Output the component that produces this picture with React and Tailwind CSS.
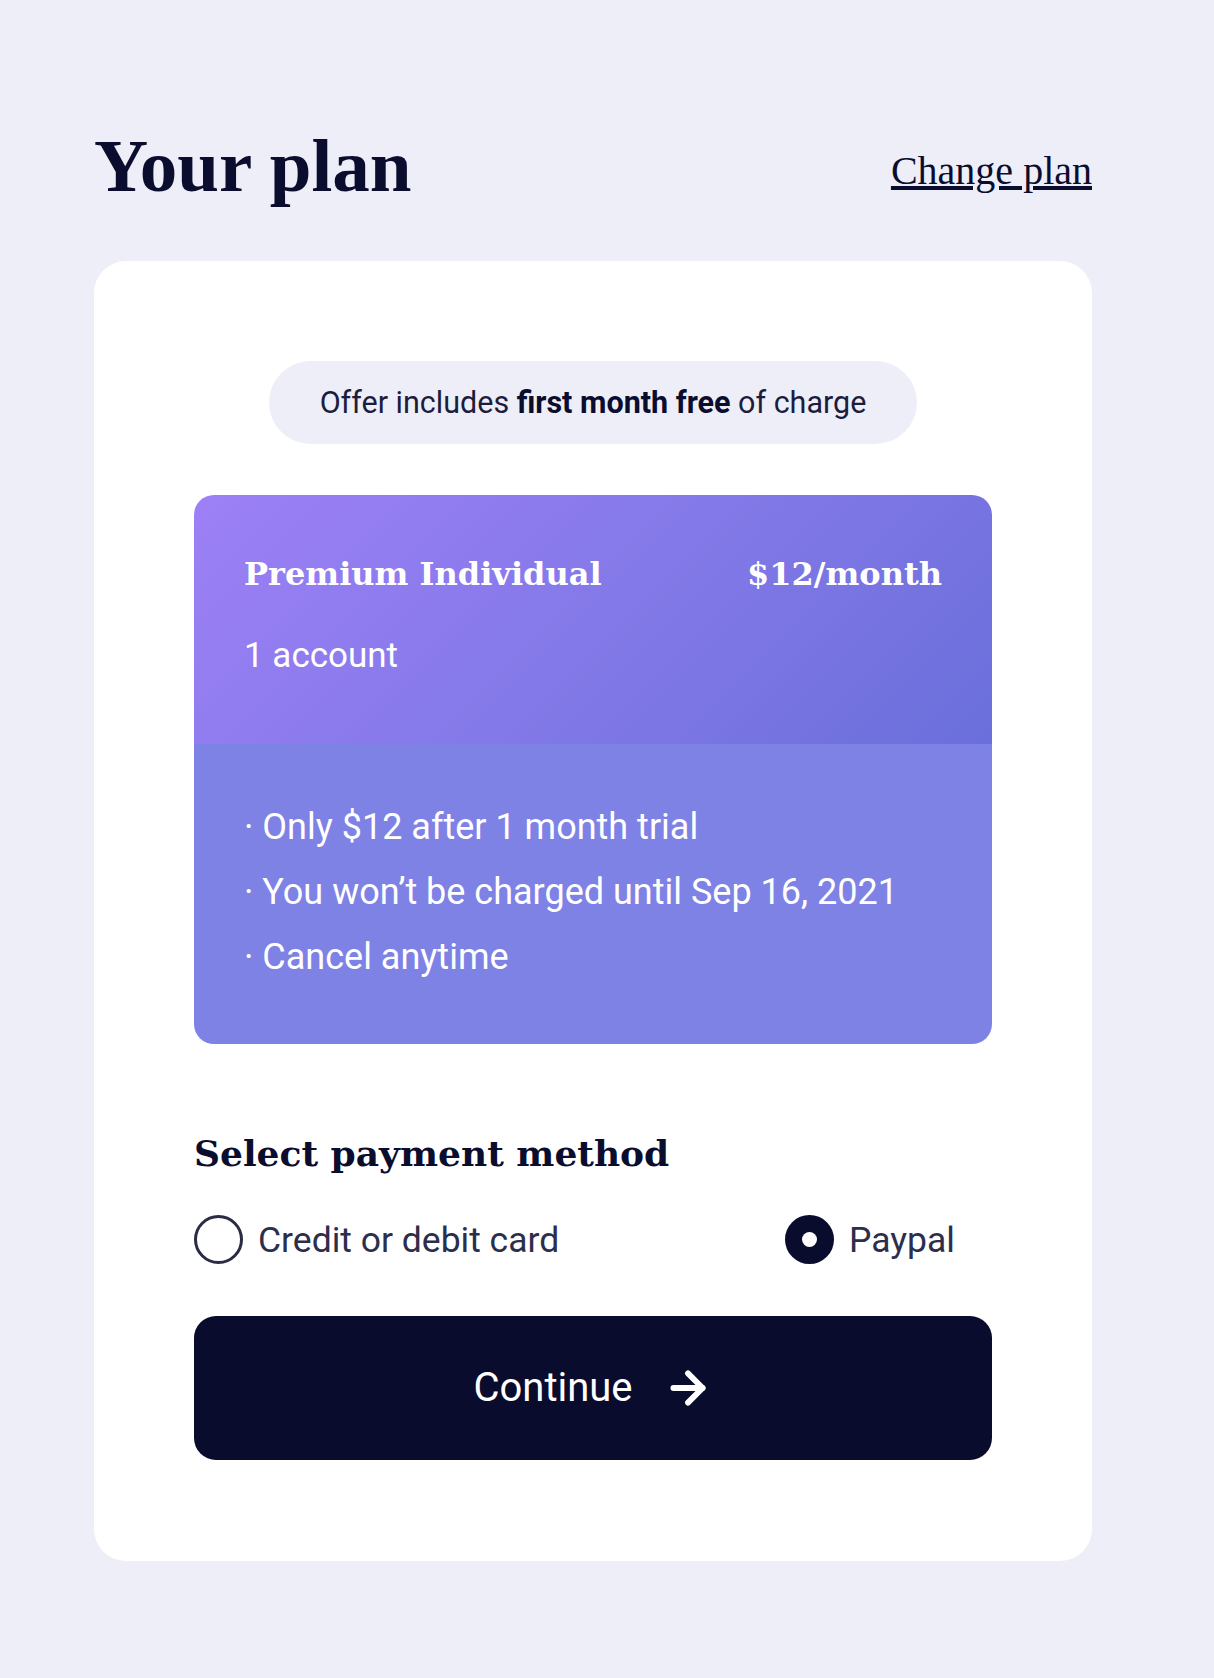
import { useState } from 'react'
import { ArrowRight } from 'lucide-react'

const serif = { fontFamily: '"Liberation Serif", serif' }
const serifBold = { fontFamily: '"DejaVu Serif", "Liberation Serif", serif' }
const sans = { fontFamily: 'Roboto, "Noto Sans", sans-serif' }

const vantagens = [
  'Only $12 after 1 month trial',
  'You won’t be charged until Sep 16, 2021',
  'Cancel anytime',
]

function Radio({ marcado, rotulo, onClick }) {
  return (
    <button type="button" onClick={onClick} className="flex items-center gap-[15px]">
      {marcado ? (
        <span className="w-[49px] h-[49px] rounded-full bg-[#0a0c2e] flex items-center justify-center">
          <span className="w-[15px] h-[15px] rounded-full bg-white" />
        </span>
      ) : (
        <span className="w-[49px] h-[49px] rounded-full border-[3px] border-[#2a2b45] bg-white" />
      )}
      <span className="text-[35.5px] leading-[40px] text-[#2c2e4c]" style={sans}>{rotulo}</span>
    </button>
  )
}

export default function App() {
  const [metodo, setMetodo] = useState('paypal')

  return (
    <div className="min-h-[1678px] bg-[#eeeef8] pt-[128px] pl-[94px]">
      <div className="w-[998px]">
        <header className="flex items-center justify-between">
          <h1 className="text-[75px] leading-[75px] font-bold text-[#0b0d2e]" style={serif}>Your plan</h1>
          <a href="#" className="mt-[10px] text-[40px] leading-[40px] text-[#0b0d2e] underline" style={serif}>Change plan</a>
        </header>

        <main className="mt-[58px] bg-white rounded-[32px] px-[100px] pt-[100px] pb-[101px]">
          <div className="flex justify-center">
            <p className="h-[83px] w-[648px] rounded-full bg-[#eeeef8] flex items-center justify-center text-[30.5px] text-[#1c1d3c]" style={sans}>
              Offer includes&nbsp;<strong className="font-bold text-[#0b0d2e]">first month free</strong>&nbsp;of charge
            </p>
          </div>

          <section className="mt-[51px] rounded-[20px] overflow-hidden text-white">
            <div className="h-[249px] px-[50px] pt-[55px] bg-[linear-gradient(135deg,#9d80f6_0%,#8479e8_50%,#6a6fdb_100%)]">
              <div className="flex justify-between text-[32px] leading-[48px] font-bold" style={serifBold}>
                <span>Premium Individual</span>
                <span>$12/month</span>
              </div>
              <p className="mt-[38px] text-[35px] leading-[40px]" style={sans}>1 account</p>
            </div>
            <ul className="h-[300px] px-[50px] pt-[51px] bg-[#7f82e5] text-[36px] leading-[65px]" style={sans}>
              {vantagens.map((v) => (
                <li key={v}>· {v}</li>
              ))}
            </ul>
          </section>

          <h2 className="mt-[87px] text-[36px] leading-[44px] font-bold text-[#0b0d2e]" style={serifBold}>Select payment method</h2>

          <div className="mt-[40px] flex items-center justify-between pr-[37px]">
            <Radio marcado={metodo === 'cartao'} rotulo="Credit or debit card" onClick={() => setMetodo('cartao')} />
            <Radio marcado={metodo === 'paypal'} rotulo="Paypal" onClick={() => setMetodo('paypal')} />
          </div>

          <button type="button" className="mt-[52px] w-full h-[144px] rounded-[22px] bg-[#0a0c2e] text-white flex items-center justify-center gap-[30px] text-[40px]" style={sans}>
            Continue
            <ArrowRight size={50} strokeWidth={2.8} />
          </button>
        </main>
      </div>
    </div>
  )
}
